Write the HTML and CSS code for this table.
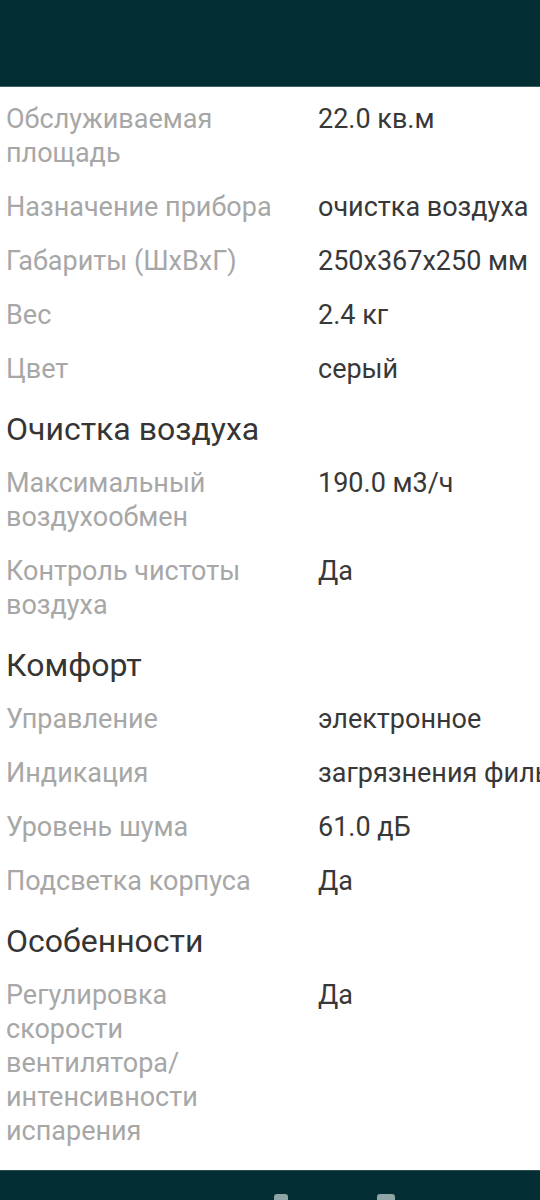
FILE: index.html
```html
<!DOCTYPE html>
<html lang="ru">
<head>
<meta charset="utf-8">
<link rel="stylesheet" href="styles.css">
</head>
<body>
<header class="topbar"></header>
<main class="specs">
  <div class="row"><div class="label">Обслуживаемая площадь</div><div class="value">22.0 кв.м</div></div>
  <div class="row"><div class="label">Назначение прибора</div><div class="value">очистка воздуха</div></div>
  <div class="row"><div class="label">Габариты (ШхВхГ)</div><div class="value">250x367x250 мм</div></div>
  <div class="row"><div class="label">Вес</div><div class="value">2.4 кг</div></div>
  <div class="row"><div class="label">Цвет</div><div class="value">серый</div></div>

  <h2 class="section">Очистка воздуха</h2>
  <div class="row"><div class="label">Максимальный воздухообмен</div><div class="value">190.0 м3/ч</div></div>
  <div class="row"><div class="label">Контроль чистоты воздуха</div><div class="value">Да</div></div>

  <h2 class="section">Комфорт</h2>
  <div class="row"><div class="label">Управление</div><div class="value">электронное</div></div>
  <div class="row"><div class="label">Индикация</div><div class="value">загрязнения фильтра</div></div>
  <div class="row"><div class="label">Уровень шума</div><div class="value">61.0 дБ</div></div>
  <div class="row"><div class="label">Подсветка корпуса</div><div class="value">Да</div></div>

  <h2 class="section">Особенности</h2>
  <div class="row"><div class="label">Регулировка скорости вентилятора/ интенсивности испарения</div><div class="value">Да</div></div>
</main>
<nav class="navbar">
  <span class="nav-icon nav-icon-left"></span>
  <span class="nav-icon nav-icon-right"></span>
</nav>
</body>
</html>
```
FILE: styles.css
```css
html, body {
  margin: 0;
  padding: 0;
  background: #ffffff;
  overflow: hidden;
}
body {
  width: 540px;
  height: 1200px;
  font-family: Roboto, "Noto Sans", sans-serif;
}
.topbar {
  height: 87px;
  background: #032e33;
  border-bottom: 1px solid #3c6468;
  box-sizing: border-box;
}
.specs {
  padding: 5px 0 0 6px;
}
.row {
  display: grid;
  grid-template-columns: 312px minmax(0, 1fr);
  padding: 10px 0;
  font-size: 27px;
  line-height: 34px;
}
.label {
  color: #a7a7a7;
  padding-right: 38px;
}
.value {
  color: #383838;
  white-space: nowrap;
  overflow: hidden;
}
.section {
  margin: 0;
  padding: 13px 0 7px;
  font-size: 32px;
  line-height: 40px;
  font-weight: 400;
  color: #353535;
}
.navbar {
  position: fixed;
  left: 0;
  right: 0;
  bottom: 0;
  height: 30px;
  background: #032e33;
  border-top: 1px solid #2e4f52;
  box-sizing: border-box;
}
.nav-icon {
  position: absolute;
  top: 23px;
  height: 10px;
  background: #8fa5a6;
  border-radius: 3px;
}
.nav-icon-left {
  left: 274px;
  width: 14px;
}
.nav-icon-right {
  left: 377px;
  width: 18px;
}
```
